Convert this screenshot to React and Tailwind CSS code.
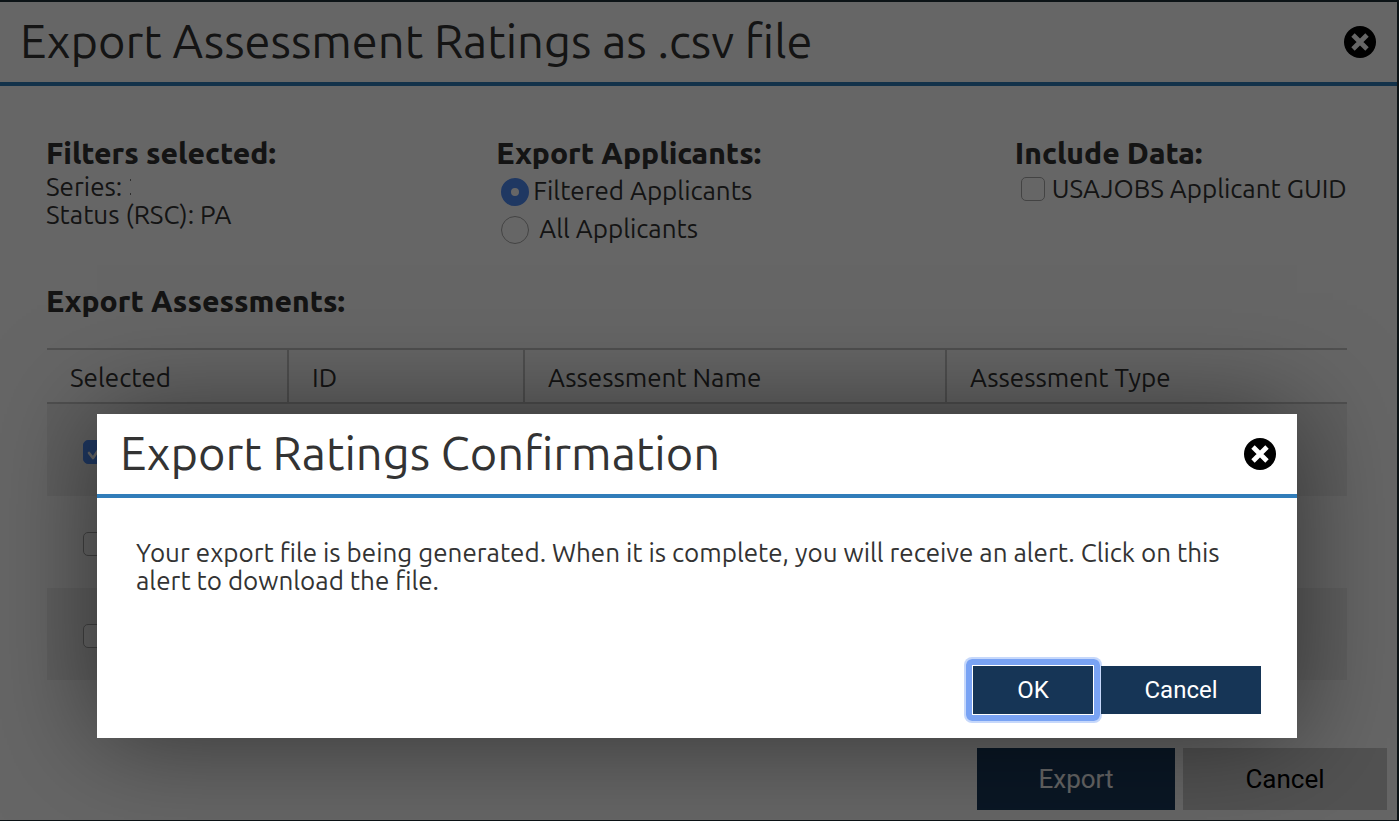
const body = "font-['Ubuntu','Noto_Sans',sans-serif]";

function CloseIcon() {
  return (
    <svg viewBox="-16 -16 32 32" className="block size-8" aria-hidden="true">
      <circle r="16" fill="#000" />
      <path d="M-7-7 7 7M7-7-7 7" stroke="#fff" strokeWidth="4.8" fill="none" />
    </svg>
  );
}

function Header({ title }) {
  return (
    <header className="flex h-[84px] items-center justify-between border-b-4 border-[#317dba] pr-[21px]">
      <h1 className="pb-[2px] text-[47px] leading-[56px] whitespace-nowrap">{title}</h1>
      <button type="button" aria-label="Close">
        <CloseIcon />
      </button>
    </header>
  );
}

function Check({ checked, label, id }) {
  return (
    <span className="relative block size-6 shrink-0">
      <input
        id={id}
        type="checkbox"
        defaultChecked={checked}
        aria-label={label}
        className="block size-6 appearance-none rounded-[5px] border border-[#a8a8a8] bg-white checked:border-[#4f8cf5] checked:bg-[#4f8cf5]"
      />
      {checked && (
        <svg viewBox="0 0 24 24" className="pointer-events-none absolute inset-0 size-6" aria-hidden="true">
          <path d="M6 13l4 5 8-12" stroke="#fff" strokeWidth="2.6" fill="none" strokeLinecap="round" strokeLinejoin="round" />
        </svg>
      )}
    </span>
  );
}

function Radio({ id, checked }) {
  return (
    <input
      id={id}
      type="radio"
      name="applicants"
      defaultChecked={checked}
      className="block size-7 shrink-0 appearance-none rounded-full border border-[#a8a8a8] bg-white checked:border-[10px] checked:border-[#4f8cf5]"
    />
  );
}

const rows = [true, false, false];
const heading = "text-[30px] leading-9 font-extrabold whitespace-nowrap";
const cell = "border-y-2 border-[#c8c8c8] pt-[3px] pl-[23px] font-normal";

export default function App() {
  return (
    <div className={`${body} relative min-h-screen bg-[#1e3039] pt-[2px] pr-[2px] pb-px text-[#333]`}>
      <main className="flex min-h-[818px] flex-col bg-white">
        <div className="[&_h1]:pl-5">
          <Header title="Export Assessment Ratings as .csv file" />
        </div>
        <div className="pt-[49px] pr-[50px] pl-[46px]">
          <div className="grid grid-cols-[450fr_518fr_332fr] text-[26px] leading-7">
            <section>
              <h2 className={heading}>Filters selected:</h2>
              <p className="flex items-center pt-[2px]">
                Series:<span className="ml-2 h-4 w-px border-y-2 border-[#777]" />
              </p>
              <p>Status (RSC): PA</p>
            </section>
            <section>
              <h2 className={heading}>Export Applicants:</h2>
              <div className="flex flex-col gap-[10px] pt-[7px] pl-[5px]">
                <div className="flex items-center gap-1">
                  <Radio id="filtered" checked />
                  <label htmlFor="filtered" className="pb-[2px] leading-[26px]">Filtered Applicants</label>
                </div>
                <div className="flex items-center gap-[10px]">
                  <Radio id="all" />
                  <label htmlFor="all" className="pb-[2px] leading-[26px]">All Applicants</label>
                </div>
              </div>
            </section>
            <section>
              <h2 className={heading}>Include Data:</h2>
              <div className="flex items-center gap-[7px] pt-1 pl-[6px]">
                <Check id="guid" />
                <label htmlFor="guid" className="whitespace-nowrap">USAJOBS Applicant GUID</label>
              </div>
            </section>
          </div>
          <h2 className={`${heading} pt-[39px]`}>Export Assessments:</h2>
          <div className="pt-[29px] pl-px">
            <table className="w-full table-fixed border-separate border-spacing-0 text-left text-[26px] leading-7">
              <thead>
                <tr className="h-14">
                  <th className={`${cell} w-[242px] border-r-2`}>Selected</th>
                  <th className={`${cell} w-[236px] border-r-2`}>ID</th>
                  <th className={`${cell} w-[422px] border-r-2`}>Assessment Name</th>
                  <th className={cell}>Assessment Type</th>
                </tr>
              </thead>
              <tbody>
                {rows.map((checked, i) => (
                  <tr key={i} className="h-[92px] odd:bg-[#f1f1f1]">
                    <td className="pt-1 pl-9">
                      <Check checked={checked} label={`Select assessment ${i + 1}`} />
                    </td>
                    <td />
                    <td />
                    <td />
                  </tr>
                ))}
              </tbody>
            </table>
          </div>
        </div>
        <footer className="mt-auto flex justify-end gap-2 pr-[10px] pb-[10px] font-['Roboto',sans-serif] text-[26px]">
          <button type="button" className="h-[62px] w-[198px] bg-[#1b3b5c] text-white">Export</button>
          <button type="button" className="h-[62px] w-[204px] bg-[#cdcdcd] text-black">Cancel</button>
        </footer>
      </main>
      <div className="absolute inset-0 overflow-hidden bg-black/60 pt-[414px] pr-[102px] pl-[97px]">
        <div role="dialog" aria-modal="true" className="bg-white shadow-[0_0_100px_rgba(0,0,0,0.5)]">
          <div className="[&_h1]:pl-[23px]">
            <Header title="Export Ratings Confirmation" />
          </div>
          <p className="px-[39px] pt-[41px] text-[26px] leading-7">
            Your export file is being generated. When it is complete, you will receive an alert. Click on this alert to
            download the file.
          </p>
          <div className="flex justify-end gap-2 pt-[71px] pr-9 pb-6 font-['Roboto',sans-serif] text-[24px] text-white">
            <button
              type="button"
              className="relative h-12 w-[120px] bg-[#163556] after:absolute after:-inset-[7px] after:rounded-[6px] after:border-[6px] after:border-[#79a3f4] after:shadow-[0_0_0_2px_#c6d8fb]"
            >
              OK
            </button>
            <button type="button" className="relative h-12 w-40 bg-[#163556]">Cancel</button>
          </div>
        </div>
      </div>
    </div>
  );
}
